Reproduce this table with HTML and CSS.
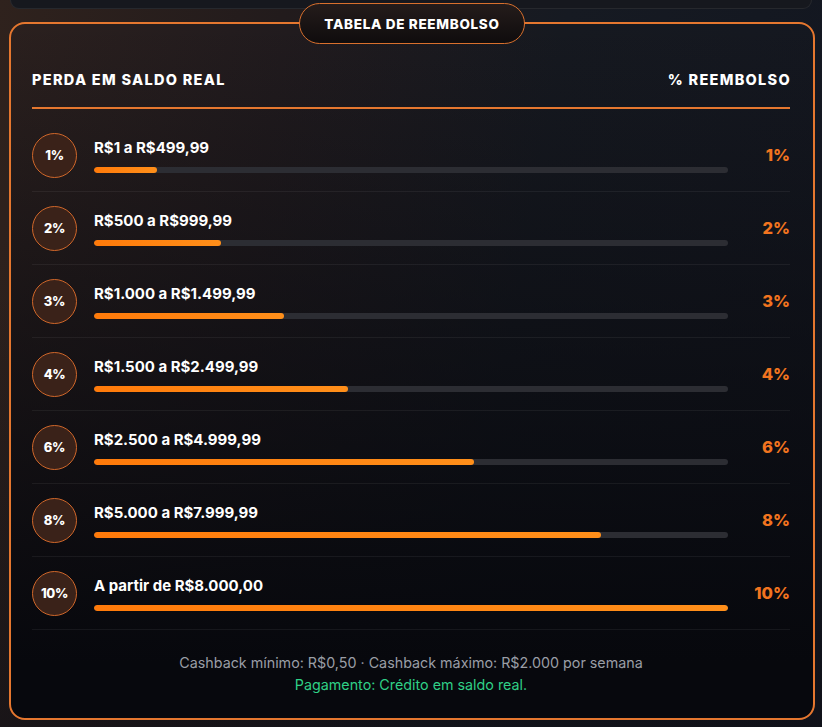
FILE: index.html
```html
<!DOCTYPE html>
<html lang="pt-BR">
<head>
<meta charset="utf-8">
<title>Tabela de Reembolso</title>
<link rel="stylesheet" href="styles.css">
</head>
<body>
<div class="prev-card"></div>
<section class="card">
  <div class="badge">TABELA DE REEMBOLSO</div>
  <div class="head">
    <span>PERDA EM SALDO REAL</span>
    <span>% REEMBOLSO</span>
  </div>
  <div class="rows">
    <div class="row">
      <div class="circle">1%</div>
      <div class="info">
        <div class="label">R$1 a R$499,99</div>
        <div class="track"><div class="fill" style="width:10%"></div></div>
      </div>
      <div class="pct">1%</div>
    </div>
    <div class="row">
      <div class="circle">2%</div>
      <div class="info">
        <div class="label">R$500 a R$999,99</div>
        <div class="track"><div class="fill" style="width:20%"></div></div>
      </div>
      <div class="pct">2%</div>
    </div>
    <div class="row">
      <div class="circle">3%</div>
      <div class="info">
        <div class="label">R$1.000 a R$1.499,99</div>
        <div class="track"><div class="fill" style="width:30%"></div></div>
      </div>
      <div class="pct">3%</div>
    </div>
    <div class="row">
      <div class="circle">4%</div>
      <div class="info">
        <div class="label">R$1.500 a R$2.499,99</div>
        <div class="track"><div class="fill" style="width:40%"></div></div>
      </div>
      <div class="pct">4%</div>
    </div>
    <div class="row">
      <div class="circle">6%</div>
      <div class="info">
        <div class="label">R$2.500 a R$4.999,99</div>
        <div class="track"><div class="fill" style="width:60%"></div></div>
      </div>
      <div class="pct">6%</div>
    </div>
    <div class="row">
      <div class="circle">8%</div>
      <div class="info">
        <div class="label">R$5.000 a R$7.999,99</div>
        <div class="track"><div class="fill" style="width:80%"></div></div>
      </div>
      <div class="pct">8%</div>
    </div>
    <div class="row">
      <div class="circle">10%</div>
      <div class="info">
        <div class="label">A partir de R$8.000,00</div>
        <div class="track"><div class="fill" style="width:100%"></div></div>
      </div>
      <div class="pct">10%</div>
    </div>
  </div>
  <div class="foot">
    <p class="limits">Cashback mínimo: R$0,50 · Cashback máximo: R$2.000 por semana</p>
    <p class="pay">Pagamento: Crédito em saldo real.</p>
  </div>
</section>
</body>
</html>
```

FILE: styles.css
```css
* { box-sizing: border-box; }
html, body {
  margin: 0;
  padding: 0;
}
body {
  width: 822px;
  height: 727px;
  overflow: hidden;
  font-family: Inter, "Open Sans", "Liberation Sans", sans-serif;
  color: #fff;
  background:
    linear-gradient(to bottom, rgba(10,12,18,0) 40%, rgba(14,14,20,0.6) 100%),
    linear-gradient(100deg, #2f221d 0%, #221b1c 30%, #161a22 60%, #121620 100%);
}
.prev-card {
  margin: 0 10px;
  height: 9px;
  background: #16181e;
  border: 1px solid rgba(255,255,255,0.07);
  border-top: none;
  border-radius: 0 0 12px 12px;
}
.card {
  position: relative;
  margin: 13px 7px 0 9px;
  height: 698px;
  border: 2px solid #e5772f;
  border-radius: 16px;
  padding: 0 23px 0 21px;
  background:
    linear-gradient(to bottom, rgba(7,8,13,0) 0%, rgba(7,8,13,0.55) 50%, #07080d 92%),
    linear-gradient(100deg, #2b201e 0%, #211b1e 30%, #161920 60%, #141720 100%);
}
.badge {
  position: absolute;
  top: -21px;
  left: 50%;
  transform: translateX(-50%);
  width: 226px;
  height: 41px;
  border: 1px solid #d9702d;
  border-radius: 21px;
  background: linear-gradient(to bottom, #241c1b 0%, #0f0c0d 100%);
  display: flex;
  align-items: center;
  justify-content: center;
  font-weight: 800;
  font-size: 13.5px;
  letter-spacing: 0.7px;
  color: #fff;
}
.head {
  display: flex;
  justify-content: space-between;
  align-items: center;
  height: 85px;
  padding-top: 27px;
  border-bottom: 2px solid #e5772f;
  font-weight: 800;
  font-size: 14.5px;
  letter-spacing: 1.3px;
}
.head span:last-child {
  margin-right: -1px;
}
.rows {
  margin-top: 10px;
}
.row {
  display: flex;
  align-items: center;
  height: 73px;
  border-bottom: 1px solid rgba(255,255,255,0.06);
}
.circle {
  flex: 0 0 45px;
  width: 45px;
  height: 45px;
  border-radius: 50%;
  border: 1px solid #d0672a;
  background: #3a2219;
  display: flex;
  align-items: center;
  justify-content: center;
  font-weight: 800;
  font-size: 13px;
  letter-spacing: -0.3px;
}
.info {
  flex: 0 0 634px;
  margin-left: 17px;
  display: flex;
  flex-direction: column;
  padding-top: 2px;
}
.label {
  font-weight: 700;
  font-size: 15px;
  line-height: 18px;
  margin-bottom: 10px;
}
.track {
  height: 6px;
  border-radius: 3px;
  background: #2c2d33;
  overflow: hidden;
}
.fill {
  height: 100%;
  border-radius: 3px;
  background: linear-gradient(to right, #ff7a0a, #ff8f1a);
}
.pct {
  flex: 1;
  text-align: right;
  font-weight: 800;
  font-size: 16.5px;
  color: #f2741f;
}
.foot {
  padding-top: 22px;
  text-align: center;
}
.foot p {
  margin: 0;
  font-size: 14.3px;
  line-height: 22px;
}
.limits { color: #9a9ea6; }
.pay { color: #2fcf86; }
```
